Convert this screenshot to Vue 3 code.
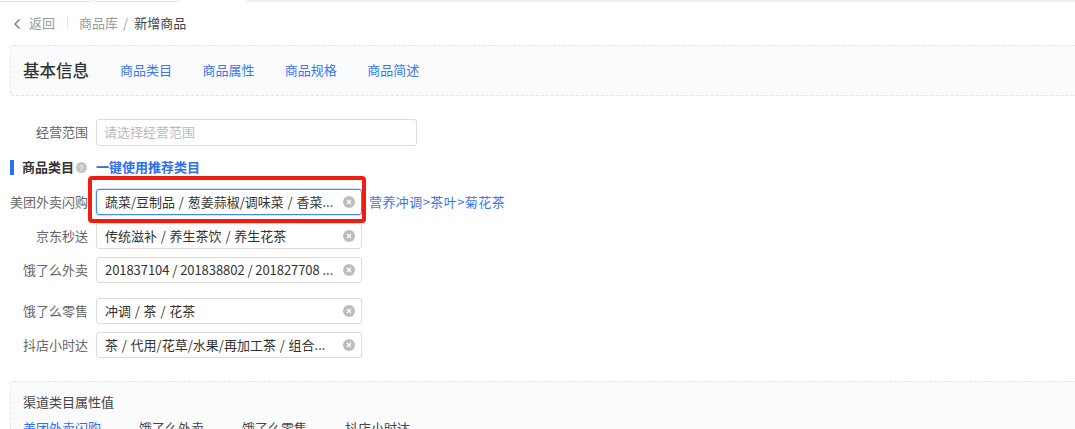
<script setup>
const tabs = ['商品类目', '商品属性', '商品规格', '商品简述']
const channels = ['美团外卖闪购', '饿了么外卖', '饿了么零售', '抖店小时达']
const rows = [
  { label: '美团外卖闪购', value: '蔬菜/豆制品 / 葱姜蒜椒/调味菜 / 香菜...', active: true, hint: '营养冲调>茶叶>菊花茶' },
  { label: '京东秒送', value: '传统滋补 / 养生茶饮 / 养生花茶' },
  { label: '饿了么外卖', value: '201837104 / 201838802 / 201827708 ...', gap: true, num: true },
  { label: '饿了么零售', value: '冲调 / 茶 / 花茶' },
  { label: '抖店小时达', value: '茶 / 代用/花草/水果/再加工茶 / 组合...' },
]
</script>

<template>
  <div class="page">
    <div class="strip">
      <span class="s1"></span><span class="s0"></span><span class="s2"></span><span class="s0"></span><span class="blank"></span><span class="s3"></span>
    </div>
    <header class="crumbs">
      <svg class="back-ic" width="8" height="12" viewBox="0 0 8 12"><path d="M6.5 1.5 2 6l4.5 4.5" fill="none" stroke="#777" stroke-width="1.4"/></svg>
      <span class="back">返回</span>
      <i class="sep"></i>
      <span class="back">商品库</span>
      <span class="slash">/</span>
      <span class="cur">新增商品</span>
    </header>

    <section class="panel top">
      <h1>基本信息</h1>
      <nav class="tabs"><a v-for="t in tabs" :key="t">{{ t }}</a></nav>
    </section>

    <div class="row scope">
      <label>经营范围</label>
      <div class="input wide"><span class="ph">请选择经营范围</span></div>
    </div>

    <div class="section-head">
      <i class="bar"></i>
      <b>商品类目</b>
      <span class="q">?</span>
      <a>一键使用推荐类目</a>
    </div>

    <div class="rows">
      <div v-for="r in rows" :key="r.label" class="row" :class="{ spaced: r.gap }">
        <label>{{ r.label }}</label>
        <div class="input" :class="{ active: r.active }">
          <span class="val" :class="{ num: r.num }">{{ r.value }}</span>
          <svg class="clear" width="12" height="12" viewBox="0 0 12 12">
            <circle cx="6" cy="6" r="6" fill="#bdbdbd"/>
            <path d="M4 4l4 4M8 4 4 8" stroke="#fff" stroke-width="1.3"/>
          </svg>
        </div>
        <a v-if="r.hint" class="hint">{{ r.hint }}</a>
      </div>
      <div class="redbox"></div>
    </div>

    <section class="panel bottom">
      <h2>渠道类目属性值</h2>
      <div class="ch">
        <span v-for="(c, i) in channels" :key="c" :class="{ on: i === 0 }">{{ c }}</span>
      </div>
    </section>
  </div>
</template>

<style>
html, body { margin: 0; background: #fff; overflow: hidden; }
</style>

<style scoped>
.page {
  width: 1075px; height: 429px; overflow: hidden; box-sizing: border-box;
  font-family: "Noto Sans CJK SC", "Noto Sans", sans-serif; font-size: 13px; color: #333; background: #fff;
}
.strip { height: 2px; display: flex; }
.s1 { width: 90px; height: 1px; margin-top: 1px; background: #dcdcdc; }
.s0 { width: 6px; background: #f6f6f6; }
.s2 { width: 79px; height: 1px; margin-top: 1px; background: #dcdcdc; }
.blank { width: 65px; }
.s3 { flex: 1; background: #f0f0f0; }
.crumbs { height: 20px; margin-top: 11px; padding-left: 13px; display: flex; align-items: center; line-height: 20px; }
.back-ic { margin-right: 8px; margin-top: 1px; }
.back { color: #9a9a9a; }
.sep { width: 1px; height: 12px; background: #e5e5e5; margin: 0 11px 0 12px; }
.slash { color: #9a9a9a; margin: 0 6px 0 5px; }
.cur { color: #444; }
.panel { margin-left: 10px; background: #fafbfd; border: 1px dashed #e2e4e9; border-right: 0; border-radius: 3px 0 0 3px; box-sizing: border-box; }
.top { height: 51px; margin-top: 12px; padding-left: 12px; display: flex; align-items: center; }
h1 { margin: -2px 0 0; font-size: 16.5px; font-weight: 500; color: #333; line-height: 22px; width: 97px; }
.tabs { display: flex; gap: 30.4px; margin-top: -3px; }
.tabs a { color: #3a76f0; font-size: 13px; }
.row { display: flex; align-items: center; height: 26px; }
label { width: 88px; margin-right: 8px; padding-bottom: 2px; text-align: right; color: #666; font-size: 13px; white-space: nowrap; }
.scope { margin-top: 23px; height: 27px; }
.input { width: 266px; height: 26px; box-sizing: border-box; border: 1px solid #dcdcdc; border-radius: 3px; background: #fff; display: flex; align-items: center; justify-content: space-between; padding: 0 6px 0 8px; }
.input.wide { width: 321px; height: 27px; padding-left: 7px; }
.input.active { border-color: #4a86f0; box-shadow: 0 0 0 1px #d6e4fc; }
.ph { color: #bbb; padding-bottom: 2px; }
.val { color: #333; white-space: nowrap; padding-bottom: 1px; word-spacing: 0.85px; }
.val.num { word-spacing: 0; letter-spacing: -0.06px; }
.clear { flex: none; }
.section-head { display: flex; align-items: center; height: 18px; margin-top: 12px; }
.bar { width: 4px; height: 15px; background: #2f6ef2; margin-left: 10px; margin-right: 8px; }
.section-head b { font-weight: 700; font-size: 13px; color: #333; line-height: 18px; }
.q { width: 11px; height: 11px; border-radius: 50%; background: #c4c4c4; color: #fff; font-size: 8px; line-height: 11px; text-align: center; margin: 0 9px 0 2px; }
.section-head a { color: #2f6ef2; font-weight: 700; font-size: 13px; line-height: 18px; }
.rows { position: relative; margin-top: 13px; display: flex; flex-direction: column; gap: 8px; }
.row.spaced { margin-bottom: 7px; }
.hint { color: #3a76f0; margin-left: 7px; font-size: 13px; letter-spacing: 0.42px; padding-bottom: 2px; }
.redbox { position: absolute; left: 88px; top: -13px; width: 278px; height: 47px; box-sizing: border-box; border: 4px solid #f01c10; border-radius: 4px; pointer-events: none; }
.bottom { margin-top: 23px; height: 60px; padding: 11px 12px 0; }
h2 { margin: 0; font-size: 13px; font-weight: 400; color: #444; line-height: 18px; }
.ch { display: flex; gap: 38px; margin-top: 7px; color: #444; }
.ch .on { color: #2f6ef2; }
</style>
